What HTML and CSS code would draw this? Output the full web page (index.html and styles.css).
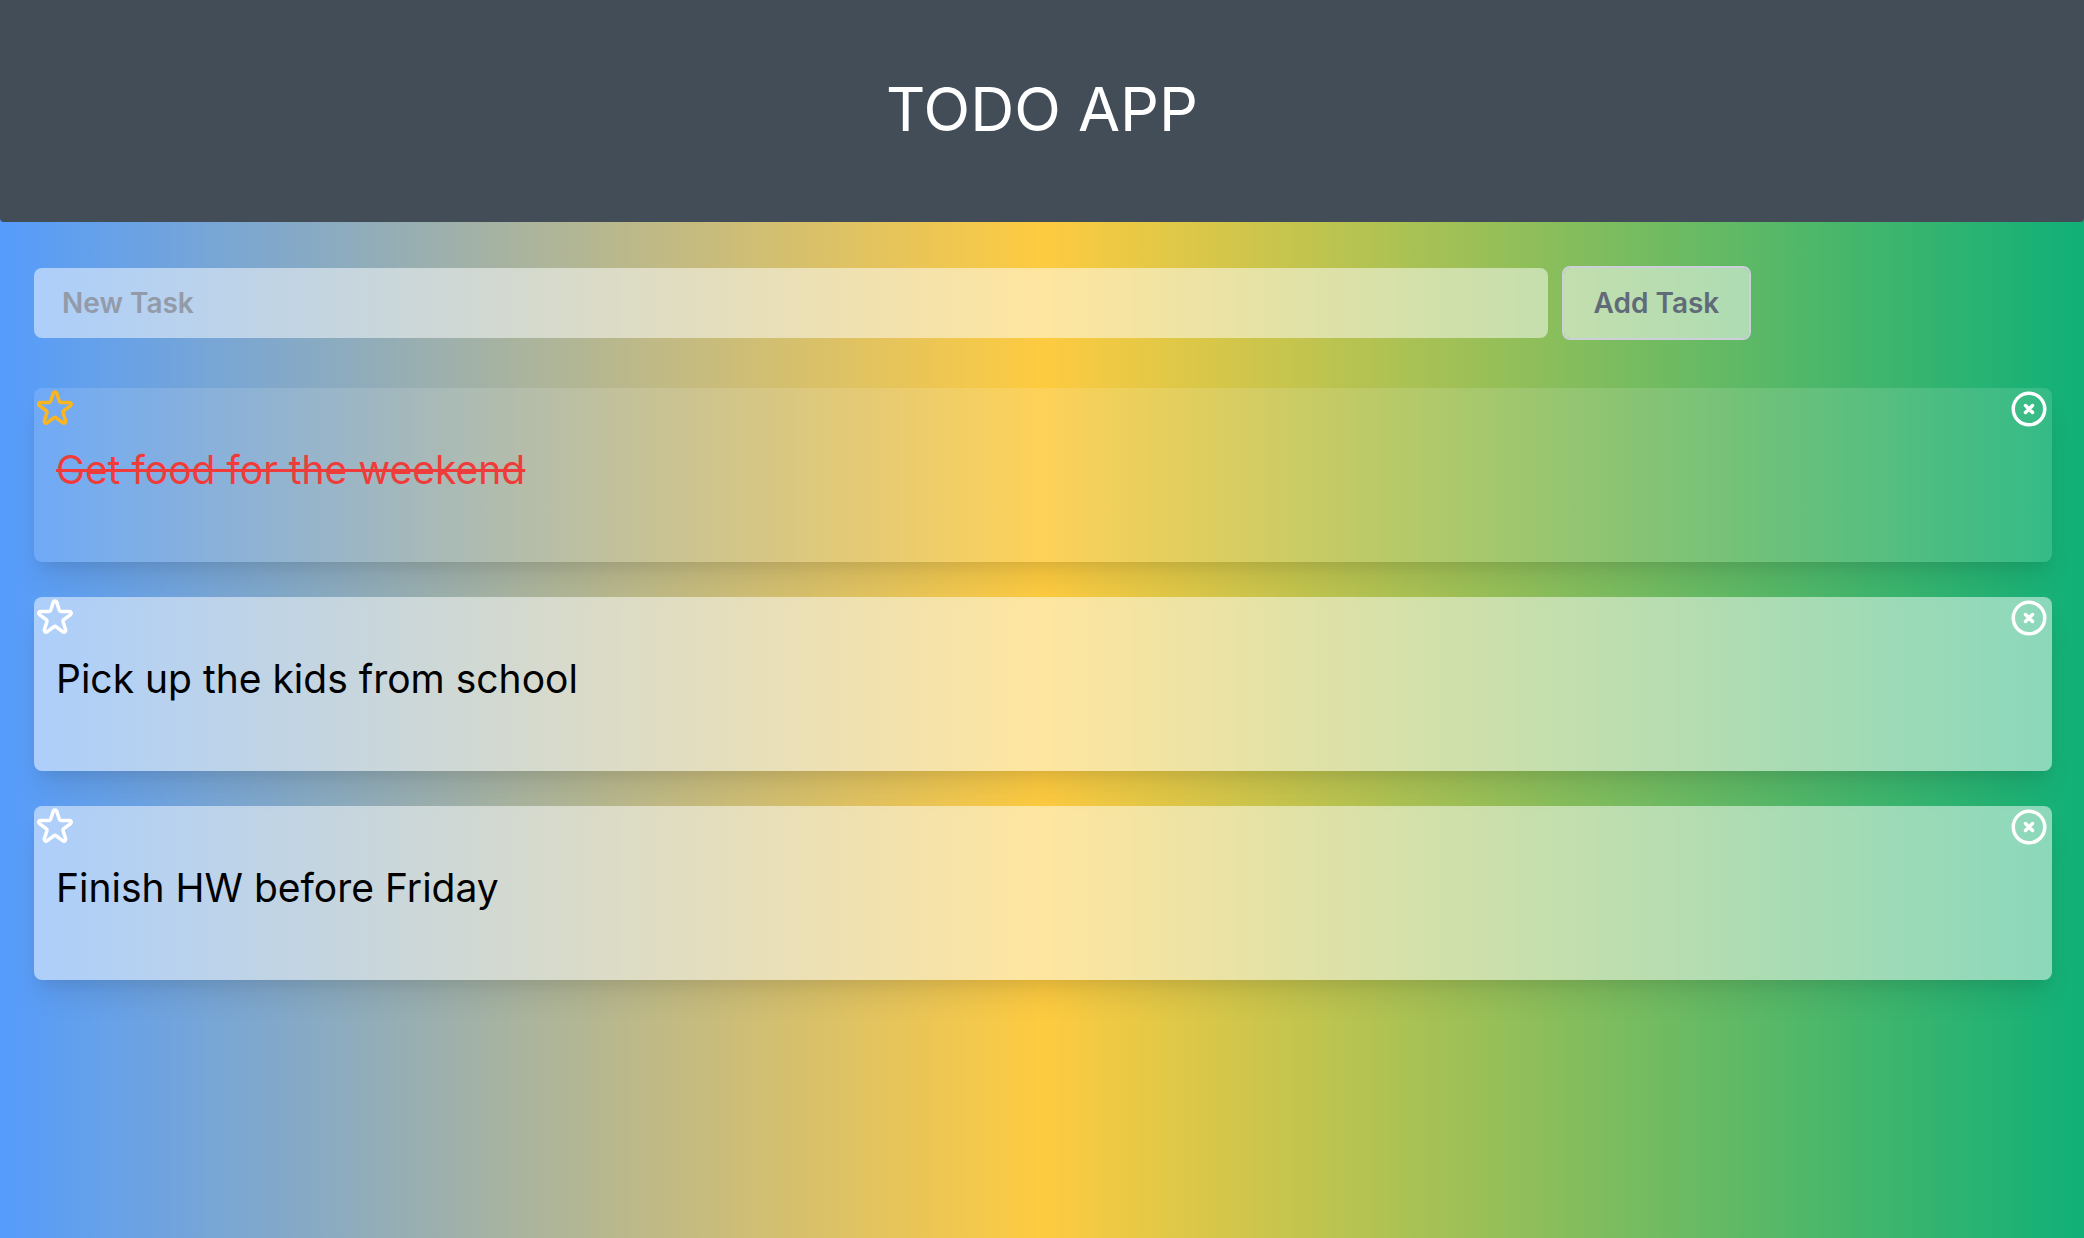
FILE: index.html
```html
<!DOCTYPE html>
<html lang="en">
<head>
<meta charset="utf-8">
<title>Todo App</title>
<link rel="stylesheet" href="styles.css">
</head>
<body>
<svg class="sprite" aria-hidden="true">
  <symbol id="star" viewBox="0 0 24 24"><path d="M11.049 2.927c.3-.921 1.603-.921 1.902 0l1.519 4.674a1 1 0 00.95.69h4.915c.969 0 1.371 1.24.588 1.81l-3.976 2.888a1 1 0 00-.363 1.118l1.518 4.674c.3.922-.755 1.688-1.538 1.118l-3.976-2.888a1 1 0 00-1.176 0l-3.976 2.888c-.783.57-1.838-.197-1.538-1.118l1.518-4.674a1 1 0 00-.363-1.118l-3.976-2.888c-.784-.57-.38-1.81.588-1.81h4.914a1 1 0 00.951-.69l1.519-4.674z"/></symbol>
  <symbol id="remove" viewBox="0 0 24 24"><path d="M10 14l2-2m0 0l2-2m-2 2l-2-2m2 2l2 2m7-2a9 9 0 11-18 0 9 9 0 0118 0z"/></symbol>
</svg>
<header class="header">
  <h1 class="title">TODO APP</h1>
</header>
<main class="content">
  <form class="task-form">
    <input class="task-input" type="text" placeholder="New Task" aria-label="New Task">
    <button class="add-button" type="button">Add Task</button>
  </form>
  <ul class="tasks">
    <li class="task task-done">
      <div class="task-actions">
        <button class="icon-button icon-starred" type="button" aria-label="Star"><svg class="icon"><use href="#star"/></svg></button>
        <button class="icon-button" type="button" aria-label="Remove"><svg class="icon"><use href="#remove"/></svg></button>
      </div>
      <p class="task-text">Get food for the weekend</p>
    </li>
    <li class="task">
      <div class="task-actions">
        <button class="icon-button" type="button" aria-label="Star"><svg class="icon"><use href="#star"/></svg></button>
        <button class="icon-button" type="button" aria-label="Remove"><svg class="icon"><use href="#remove"/></svg></button>
      </div>
      <p class="task-text">Pick up the kids from school</p>
    </li>
    <li class="task">
      <div class="task-actions">
        <button class="icon-button" type="button" aria-label="Star"><svg class="icon"><use href="#star"/></svg></button>
        <button class="icon-button" type="button" aria-label="Remove"><svg class="icon"><use href="#remove"/></svg></button>
      </div>
      <p class="task-text">Finish HW before Friday</p>
    </li>
  </ul>
</main>
</body>
</html>
```
FILE: styles.css
```css
* {
  box-sizing: border-box;
}

body {
  margin: 0;
  min-height: 100vh;
  font-family: Inter, "Liberation Sans", sans-serif;
  background: linear-gradient(to right, #559cfc, #fecb40, #10b078);
}

.sprite {
  display: none;
}

.header {
  padding: 62px 32px 66px;
  border-radius: 0 0 4px 4px;
  background: #434d58;
  text-align: center;
}

.title {
  margin: 0;
  font-size: 61px;
  font-weight: 400;
  line-height: 94px;
  color: #fff;
}

.content {
  padding: 44px 32px 64px 34px;
}

.task-form {
  display: flex;
  align-items: center;
  gap: 14px;
  margin-bottom: 48px;
}

.task-input,
.add-button {
  font: 600 28px/42px Inter, "Liberation Sans", sans-serif;
  border-radius: 8px;
  background: rgba(255, 255, 255, 0.5);
}

.task-input {
  width: 75%;
  padding: 14px 28px;
  border: 0;
  color: #434d58;
}

.task-input::placeholder {
  color: #949ba8;
  opacity: 1;
}

.add-button {
  padding: 14px 30px;
  border: 2px solid #cdd0da;
  background-clip: padding-box;
  color: #616a79;
}

.tasks {
  display: grid;
  gap: 35px;
  margin: 0;
  padding: 0;
  list-style: none;
}

.task {
  padding-bottom: 62px;
  border-radius: 8px;
  background: rgba(255, 255, 255, 0.5);
  box-shadow: 0 20px 30px -6px rgba(0, 0, 0, 0.1), 0 8px 12px -4px rgba(0, 0, 0, 0.05);
}

.task-done {
  background: rgba(255, 255, 255, 0.13);
}

.task-actions {
  display: flex;
  justify-content: space-between;
  padding-right: 2px;
}

.icon-button {
  padding: 0;
  border: 0;
  background: none;
  color: #fff;
}

.icon-starred {
  color: #fbb51e;
}

.icon {
  display: block;
  width: 42px;
  height: 42px;
  fill: none;
  stroke: currentColor;
  stroke-width: 2;
  stroke-linecap: round;
  stroke-linejoin: round;
}

.task-text {
  margin: 0;
  padding: 10px 22px 0;
  font-size: 39px;
  line-height: 60px;
  color: #000;
}

.task-done .task-text {
  color: #ef3c3a;
  text-decoration: line-through;
}
```
